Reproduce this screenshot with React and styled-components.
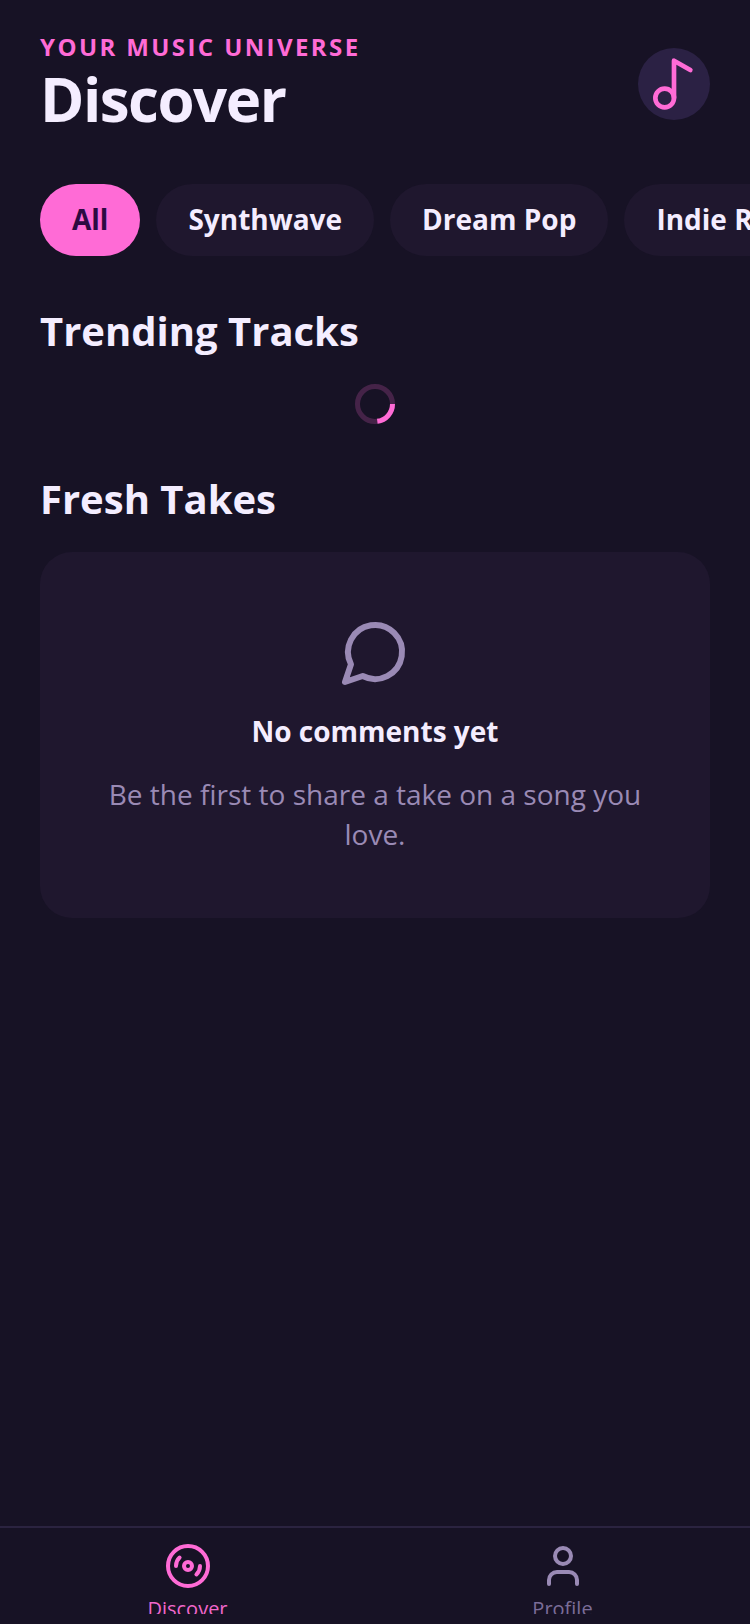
import React, { useState } from 'react';
import styled, { createGlobalStyle } from 'styled-components';
import { Disc3, Music2, User } from 'lucide-react';

const genres = ['All', 'Synthwave', 'Dream Pop', 'Indie Rock'];

function App() {
  const [genre, setGenre] = useState('All');

  return (
    <Page>
      <GlobalStyle />
      <Main>
        <Header>
          <div>
            <Eyebrow>YOUR MUSIC UNIVERSE</Eyebrow>
            <PageTitle>Discover</PageTitle>
          </div>
          <LogoCircle>
            <Music2 size={56} />
          </LogoCircle>
        </Header>
        <GenreRow>
          {genres.map((name) => (
            <GenreButton
              key={name}
              type="button"
              $active={name === genre}
              aria-pressed={name === genre}
              onClick={() => setGenre(name)}
            >
              {name}
            </GenreButton>
          ))}
        </GenreRow>
        <Section>
          <SectionTitle>Trending Tracks</SectionTitle>
          <Spinner />
        </Section>
        <Section>
          <SectionTitle>Fresh Takes</SectionTitle>
          <EmptyCard>
            <CommentIcon />
            <EmptyTitle>No comments yet</EmptyTitle>
            <EmptyText>Be the first to share a take on a song you love.</EmptyText>
          </EmptyCard>
        </Section>
      </Main>
      <TabBar>
        <TabLink href="#discover" $active aria-current="page">
          <Disc3 size={48} />
          <TabLabel $active>Discover</TabLabel>
        </TabLink>
        <TabLink href="#profile">
          <User size={48} />
          <TabLabel>Profile</TabLabel>
        </TabLink>
      </TabBar>
    </Page>
  );
}

function Spinner() {
  return (
    <SpinnerSvg viewBox="0 0 40 40" role="img" aria-label="Loading">
      <circle cx="20" cy="20" r="17.5" opacity="0.2" />
      <path d="M37.5 20A17.5 17.5 0 0 1 22.3 37.35" />
    </SpinnerSvg>
  );
}

function CommentIcon() {
  return (
    <CommentSvg viewBox="0 0 24 24" aria-hidden="true">
      <path d="M7.9 20A9 9 0 1 0 4 16.1L2 22Z" />
    </CommentSvg>
  );
}

export default App;

const GlobalStyle = createGlobalStyle`
  * {
    box-sizing: border-box;
  }
  body {
    margin: 0;
    background-color: #171225;
    color: #f4edff;
    font-family: 'Open Sans', 'Noto Sans', sans-serif;
  }
`;

const Page = styled.div`
  display: flex;
  flex-direction: column;
  min-height: 100vh;
`;

const Main = styled.main`
  display: flex;
  flex-direction: column;
  flex: 1;
  padding-top: 30px;
`;

const Header = styled.header`
  display: flex;
  justify-content: space-between;
  align-items: center;
  padding: 0 40px;
`;

const Eyebrow = styled.p`
  margin: 0;
  color: #ff6bd6;
  font-size: 24px;
  font-weight: 700;
  line-height: 34px;
  letter-spacing: 0.1em;
`;

const PageTitle = styled.h1`
  margin: 0 0 4px;
  font-size: 60px;
  font-weight: 700;
  line-height: 70px;
  letter-spacing: -0.025em;
`;

const LogoCircle = styled.div`
  display: flex;
  align-items: center;
  justify-content: center;
  width: 72px;
  height: 72px;
  border-radius: 50%;
  background-color: #2b2144;
  color: #ff6bd6;
`;

const GenreRow = styled.div`
  display: flex;
  gap: 16px;
  margin-top: 46px;
  padding: 0 40px;
  overflow-x: auto;
  scrollbar-width: none;
`;

const GenreButton = styled.button`
  flex-shrink: 0;
  padding: 16px 32px 18px;
  border: none;
  border-radius: 36px;
  background-color: ${(props) => (props.$active ? '#ff6bd6' : '#1f172e')};
  color: ${(props) => (props.$active ? '#2d0a42' : '#f4edff')};
  font-family: inherit;
  font-size: 28px;
  font-weight: 700;
  line-height: 38px;
  cursor: pointer;
`;

const Section = styled.section`
  display: flex;
  flex-direction: column;
  gap: 26px;
  margin-top: 48px;
  padding: 0 40px;
`;

const SectionTitle = styled.h2`
  margin: 0;
  font-size: 40px;
  font-weight: 700;
  line-height: 54px;
`;

const SpinnerSvg = styled.svg`
  align-self: center;
  width: 40px;
  height: 40px;
  fill: none;
  stroke: #ff6bd6;
  stroke-width: 5;
`;

const EmptyCard = styled.div`
  display: flex;
  flex-direction: column;
  align-items: center;
  gap: 24px;
  padding: 64px;
  border-radius: 32px;
  background-color: #1f172e;
  text-align: center;
`;

const CommentSvg = styled.svg`
  width: 72px;
  height: 72px;
  fill: none;
  stroke: #9a8ab5;
  stroke-width: 2;
  stroke-linecap: round;
  stroke-linejoin: round;
`;

const EmptyTitle = styled.h3`
  margin: 0;
  font-size: 28px;
  font-weight: 700;
  line-height: 38px;
`;

const EmptyText = styled.p`
  margin: 0;
  color: #9a8ab5;
  font-size: 28px;
  line-height: 40px;
`;

const TabBar = styled.nav`
  display: flex;
  padding: 14px 0 10px;
  border-top: 2px solid #2b2340;
`;

const TabLink = styled.a`
  display: flex;
  flex: 1;
  flex-direction: column;
  align-items: center;
  gap: 4px;
  height: 72px;
  overflow: hidden;
  color: ${(props) => (props.$active ? '#ff6bd6' : '#9a8ab5')};
  text-decoration: none;

  svg {
    flex-shrink: 0;
  }
`;

const TabLabel = styled.span`
  flex-shrink: 0;
  color: ${(props) => (props.$active ? '#f067cb' : '#7b6d98')};
  font-size: 20px;
  line-height: 30px;
`;
